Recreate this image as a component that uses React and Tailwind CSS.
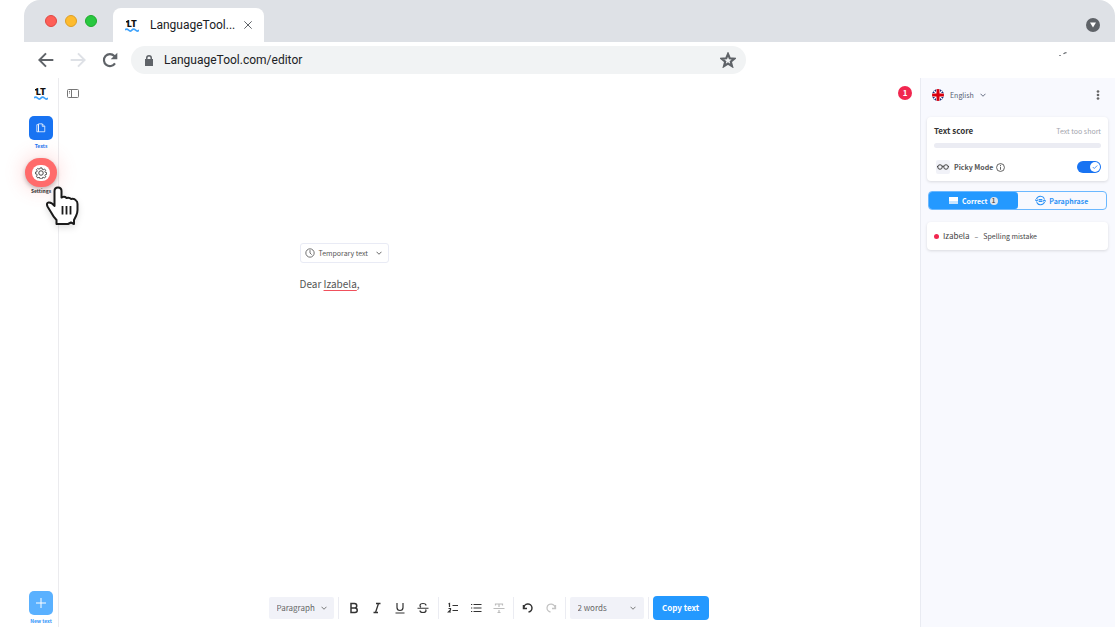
import { useState } from 'react';

function Icon({ className = 'size-3', children, width = 2, viewBox = '0 0 24 24' }) {
  return (
    <svg
      viewBox={viewBox}
      className={`shrink-0 ${className}`}
      fill="none"
      stroke="currentColor"
      strokeWidth={width}
      aria-hidden="true"
    >
      {children}
    </svg>
  );
}

function Logo() {
  return (
    <svg viewBox="0 -8 28 36" className="w-3.5 h-[18px] shrink-0" role="img" aria-label="LanguageTool">
      <text x="4" y="14" fontFamily="Inter, sans-serif" fontWeight="900" fontSize="17" fill="#111">
        LT
      </text>
      <path d="M2 2h5v3H2z" fill="#111" />
      <path
        d="M0 20q3-4 7 0t7 0 7 0 7 0"
        fill="none"
        stroke="#3ea2fb"
        strokeWidth="3.500"
      />
    </svg>
  );
}

function Chevron({ className = 'size-1.5' }) {
  return (
    <Icon className={className} width={3.5}>
      <path d="M2 7l10 10L22 7" />
    </Icon>
  );
}

function TabStrip() {
  return (
    <div className="h-[42px] flex items-end bg-[#dee1e6] rounded-t-2xl">
      <div className="self-center flex gap-2 pl-[21px] pr-4">
        <button aria-label="Close" className="size-3 rounded-full bg-[#fe5f57] border border-[#df4843]" />
        <button aria-label="Minimize" className="size-3 rounded-full bg-[#febb2e] border border-[#dd9f25]" />
        <button aria-label="Maximize" className="size-3 rounded-full bg-[#28c840] border border-[#1eab2c]" />
      </div>
      <div className="w-[151px] h-[34px] bg-white rounded-t-lg flex items-center px-3">
        <Logo />
        <span className="ml-[11px] text-[12px] leading-4 text-[#202124] grow">LanguageTool...</span>
        <button aria-label="Close tab" className="text-[#5f6368]">
          <Icon className="size-2" width={3}>
            <path d="M1 1l22 22M23 1L1 23" />
          </Icon>
        </button>
      </div>
      <button
        aria-label="Search tabs"
        className="ml-auto mr-[15px] mb-2.5 size-3.5 rounded-full bg-[#5f6368] flex items-center justify-center"
      >
        <svg viewBox="0 0 10 10" className="size-1.5" fill="#fff">
          <path d="M0 1h10L5 9z" />
        </svg>
      </button>
    </div>
  );
}

function AddressBar() {
  return (
    <div className="h-9 flex items-center bg-white pl-3.5">
      <nav className="flex items-center gap-4 text-[#5f6368]">
        <button aria-label="Back">
          <Icon className="size-4" width={3}>
            <path d="M23 12H3M12 2L2 12l10 10" />
          </Icon>
        </button>
        <button aria-label="Forward" className="text-[#dee1e6]">
          <Icon className="size-4" width={3}>
            <path d="M1 12h20M12 2l10 10-10 10" />
          </Icon>
        </button>
        <button aria-label="Reload">
          <Icon className="size-4" width={3.2}>
            <path d="M19.500 17a9 9 0 1 1-1-11l2 2" />
            <path d="M23 1v10H13z" fill="currentColor" stroke="none" />
          </Icon>
        </button>
      </nav>
      <div className="ml-[13px] w-[615px] h-7 rounded-full bg-[#f1f3f4] flex items-center pl-3.5 pr-2.5 text-[#5f6368]">
        <svg viewBox="0 0 16 22" className="w-2 h-[11px]" fill="currentColor">
          <path d="M2 8V6a6 6 0 0 1 12 0v2h2v14H0V8zm3 0h6V6a3 3 0 0 0-6 0z" />
        </svg>
        <input
          aria-label="Address"
          defaultValue="LanguageTool.com/editor"
          className="ml-[11px] grow min-w-0 bg-transparent text-[12px] leading-4 text-[#202124] outline-none"
        />
        <button aria-label="Bookmark">
          <Icon className="size-4" width={3.2}>
            <path d="M12 3l2.600 6.400 7 .5-5.400 4.500 1.800 6.800-6-3.800-6 3.800 1.800-6.800L2.400 9.900l7-.5z" />
          </Icon>
        </button>
      </div>
      <svg viewBox="0 0 8 4" className="ml-auto mr-12 mb-3 w-2 h-1" fill="none" stroke="#5f6368">
        <path d="M0 3.500h2" strokeWidth=".7" />
        <path d="M4.500 2Q5.500 .7 7.500.7" strokeWidth="1.200" />
      </svg>
    </div>
  );
}

function Pointer() {
  return (
    <svg
      viewBox="0 0 34 40"
      className="absolute left-3.5 top-7 z-20 w-[34px] h-10 drop-shadow-md pointer-events-none"
      aria-hidden="true"
    >
      <path
        d="M9.500 5q0-3.500 3.500-3.500T16.500 5v6.500q3-1.500 5 .5 3-1 4.500 1 3-1 5 1.500 1.500 1 1.500 3.500v6q0 3-1.500 6t-2 4V38l-3-1.500-3 1.500H11.500v-4q-3-3-5-7L2.500 20.500Q1 17 3.500 16.500q3-.5 6 3.500z"
        fill="#fff"
        stroke="#1b1b1b"
        strokeWidth="2"
        strokeLinejoin="round"
      />
      <path d="M17.500 20v8.500M21.500 20v8.500M25.500 20v8.500" stroke="#1b1b1b" strokeWidth="1.800" />
    </svg>
  );
}

function Sidebar() {
  return (
    <aside className="w-[35px] shrink-0 bg-white border-r border-[#ebebee] flex flex-col items-center pt-1.5">
      <Logo />
      <button className="mt-3.5 flex flex-col items-center text-[5px] leading-3 font-bold text-[#1873f2]">
        <span className="size-6 rounded-[5px] bg-[#1873f2] text-white flex items-center justify-center">
          <Icon className="size-2.5" width={1.8}>
            <path d="M6 2h9l6 6v13H6zM15 2v6h6M6 4H2v17h4M6 4v17" />
          </Icon>
        </span>
        Texts
      </button>
      <div className="relative mt-1.5">
        <button className="flex flex-col items-center text-[5px] leading-3 font-bold text-[#333]">
          <span className="-mx-2 w-8 h-[29px] rounded-full bg-[#ff6b6b] shadow-[0_0_16px_6px_#ff6b6b26,0_2px_4px_#0004] flex items-center justify-center">
            <span className="w-[18px] h-4 rounded-full bg-white flex items-center justify-center">
              <Icon className="size-3" width={1.8}>
                <path d="M10 2h4l.6 3 2 .9 2.600-1.700 2.800 2.800-1.700 2.600.8 2 2.900.6v3.600l-2.900.6-.8 2 1.700 2.600-2.800 2.800-2.600-1.700-2 .9-.6 2.900h-4l-.6-2.900-2-.9-2.600 1.700L2 19.900l1.700-2.600-.8-2L0 14.700V11l2.900-.6.8-2L2 5.800 4.800 3l2.600 1.700 2-.9z" transform="translate(1 0) scale(.93)" />
                <circle cx="12" cy="12" r="4.500" />
              </Icon>
            </span>
          </span>
          <span className="-mt-0.5 relative">Settings</span>
        </button>
        <Pointer />
      </div>
      <button className="mt-auto flex flex-col items-center whitespace-nowrap text-[5px] leading-3 font-bold text-[#3296fa]">
        <span className="size-6 rounded-[5px] bg-[#5ab1ff] text-white flex items-center justify-center">
          <Icon className="size-2.5" width={2.4}>
            <path d="M12 0v24M0 12h24" />
          </Icon>
        </span>
        New text
      </button>
    </aside>
  );
}

function Divider() {
  return <span className="w-px h-[22px] bg-[#ebecf2]" />;
}

function Toolbar() {
  return (
    <div className="mt-auto mb-[7px] pr-0.5 flex items-center justify-center text-[#333]">
      <div className="relative flex items-center mr-1 text-[#666]">
        <select
          aria-label="Text style"
          className="appearance-none w-[65px] h-[22px] pl-2 rounded-xs bg-[#f1f2f8] text-[8px] leading-3"
        >
          <option>Paragraph</option>
        </select>
        <Chevron className="size-1.5 absolute right-[7px] pointer-events-none" />
      </div>
      <Divider />
      <div className="flex items-center gap-[11px] px-[9px]">
        <button aria-label="Bold">
          <Icon width={3}>
            <path d="M6 3h7a4.500 4.500 0 0 1 0 9H6zM6 12h8a4.500 4.500 0 0 1 0 9H6z" />
          </Icon>
        </button>
        <button aria-label="Italic">
          <Icon width={2.6}>
            <path d="M10 3h9M5 21h9M15 3L9 21" />
          </Icon>
        </button>
        <button aria-label="Underline">
          <Icon width={2.4}>
            <path d="M6 2v9a6 6 0 0 0 12 0V2M3 22h18" />
          </Icon>
        </button>
        <button aria-label="Strikethrough">
          <Icon width={2.4}>
            <path d="M18 7c0-3-3-4-6-4S6 4 6 7c0 2 1 3 2 3.500M1 12.500h22M6 17c0 3 3 4 6 4s6-1 6-4c0-1-.3-1.500-1-2" />
          </Icon>
        </button>
      </div>
      <Divider />
      <div className="flex items-center gap-[11px] px-2">
        <button aria-label="Numbered list">
          <Icon width={2.4}>
            <path d="M11 7h11M11 17h11M3 4l2-1v7M3 13h4v3l-4 4h5" />
          </Icon>
        </button>
        <button aria-label="Bullet list">
          <Icon width={2.4}>
            <path d="M7 5h16M7 12h16M7 19h16M2 5h2.500M2 12h2.500M2 19h2.500" />
          </Icon>
        </button>
        <button aria-label="Clear formatting" className="text-[#bbb]">
          <Icon width={2.4}>
            <path d="M5 7V4h14v3M12 4v6M1 13h22M12 16v5M9 21h6" />
          </Icon>
        </button>
      </div>
      <Divider />
      <div className="flex items-center gap-[11px] px-2">
        <button aria-label="Undo">
          <Icon width={3}>
            <path d="M3 6v7h7M4 13a8 8 0 1 1 9 7" />
          </Icon>
        </button>
        <button aria-label="Redo" className="text-[#c4c4c4]">
          <Icon width={2.6}>
            <path d="M21 6v7h-7M20 13a8 8 0 1 0-9 7" />
          </Icon>
        </button>
      </div>
      <Divider />
      <div className="relative flex items-center mx-1 text-[#666]">
        <select
          aria-label="Text statistics"
          className="appearance-none w-[74px] h-[22px] pl-2 rounded-xs bg-[#f1f2f8] text-[8px] leading-3"
        >
          <option>2 words</option>
        </select>
        <Chevron className="size-1.5 absolute right-2 pointer-events-none" />
      </div>
      <Divider />
      <button className="ml-1 w-14 h-6 rounded-[4px] bg-[#2499ff] text-white text-[8px] leading-3 font-bold">
        Copy text
      </button>
    </div>
  );
}

function Editor() {
  return (
    <main className="grow min-w-0 flex flex-col bg-white">
      <div className="flex items-center justify-between pt-2 pl-2 pr-2">
        <button aria-label="Toggle sidebar" className="text-[#777]">
          <Icon className="w-3 h-[9px]" viewBox="0 0 24 18">
            <rect x="1" y="1" width="22" height="16" rx="2" />
            <path d="M9 1v16M4 5h2M4 8h2" />
          </Icon>
        </button>
        <span className="size-3.5 rounded-full bg-[#f1264f] text-white text-[8px] leading-3 font-bold flex items-center justify-center">
          1
        </span>
      </div>
      <div className="w-[380px] mx-auto mt-[143px] text-[#555]">
        <button className="h-5 px-1 flex items-center rounded-[3px] border border-[#e9ebf5] text-[7px] leading-3">
          <Icon className="size-2.5 mr-1">
            <circle cx="12" cy="12" r="10" />
            <path d="M12 5v7l4 4" />
          </Icon>
          Temporary text
          <Chevron className="size-1.5 ml-2 mr-0.5" />
        </button>
        <div
          contentEditable
          suppressContentEditableWarning
          role="textbox"
          aria-label="Text"
          spellCheck={false}
          className="mt-[13px] text-[10px] leading-4 outline-none"
        >
          Dear{' '}
          <span className="underline decoration-[#f0505c] decoration-1 underline-offset-2">Izabela</span>,
        </div>
      </div>
      <Toolbar />
    </main>
  );
}

function Flag() {
  return (
    <svg viewBox="0 0 24 24" className="size-3 rounded-full" aria-hidden="true">
      <path d="M0 0h24v24H0z" fill="#1b2a7b" />
      <path d="M2 2l20 20M22 2L2 22" stroke="#fff" strokeWidth="2.500" />
      <path d="M12 0v24M0 12h24" stroke="#fff" strokeWidth="8" />
      <path d="M12 0v24M0 12h24" stroke="#d80010" strokeWidth="6" />
    </svg>
  );
}

function Panel() {
  const [picky, setPicky] = useState(true);
  return (
    <aside className="w-[195px] shrink-0 bg-[#f8f9fe] border-l border-[#e9ebf2] pl-1.5 pr-[7px] text-[7px] leading-3 text-[#444]">
      <div className="h-[33px] flex items-center pl-[5px] pr-2">
        <Flag />
        <div className="relative flex items-center ml-1.5 text-[#555d73]">
          <select aria-label="Language" className="appearance-none w-9 h-4 bg-transparent">
            <option>English</option>
          </select>
          <Chevron className="size-1.5 absolute right-0 pointer-events-none" />
        </div>
        <button aria-label="More options" className="ml-auto">
          <svg viewBox="0 0 4 12" className="w-1 h-2.5" fill="#666">
            <circle cx="2" cy="1.800" r="1.600" />
            <circle cx="2" cy="6" r="1.600" />
            <circle cx="2" cy="10.200" r="1.600" />
          </svg>
        </button>
      </div>

      <section className="mt-1.5 rounded-[4px] bg-white px-[7px] pt-2 pb-1.5 shadow-[0_1px_3px_#00000020]">
        <div className="flex items-center justify-between">
          <h2 className="text-[8px] font-bold text-[#333]">Text score</h2>
          <span className="text-[#a3a5ad]">Text too short</span>
        </div>
        <div className="mt-1.5 h-[5px] rounded-full bg-[#ebecf3]" />
        <div className="mt-[11px] h-4 flex items-center">
          <span className="ml-0.5 size-3.5 rounded-xs bg-[#f1f2f8] flex items-center justify-center">
            <Icon className="w-3 h-1.5" viewBox="0 0 24 12">
              <circle cx="6" cy="6" r="4.500" />
              <circle cx="18" cy="6" r="4.500" />
              <path d="M10 5q2-2 4 0M0 5h2M22 5h2" />
            </Icon>
          </span>
          <label htmlFor="picky" className="ml-1 font-bold text-[#555]">
            Picky Mode
          </label>
          <Icon className="size-[9px] ml-[3px]" width={2.2}>
            <circle cx="12" cy="12" r="10.500" />
            <path d="M12 10v8M12 5v3" />
          </Icon>
          <span className="relative ml-auto w-6 h-3">
            <input
              id="picky"
              type="checkbox"
              checked={picky}
              onChange={(e) => setPicky(e.target.checked)}
              className="peer appearance-none block w-6 h-3 rounded-full bg-gray-300 checked:bg-[#1873f2]"
            />
            <span className="absolute top-px left-px peer-checked:left-[13px] size-2.5 rounded-full bg-white text-[#1873f2] flex items-center justify-center pointer-events-none">
              <Icon className="size-1.5" width={3}>
                <path d="M3 12l6 6L21 6" />
              </Icon>
            </span>
          </span>
        </div>
      </section>

      <div className="mt-2.5 mx-px h-[19px] flex rounded-[4px] border border-[#6bb8ff] overflow-hidden font-bold">
        <button className="flex-1 flex items-center justify-center bg-[#2499ff] text-white rounded-r-[3px]">
          <svg viewBox="0 0 18 14" className="w-[9px] h-[7px] mr-1" fill="#fff">
            <path d="M0 0h18v8H0z" />
            <path d="M0 8h18v6H0z" fillOpacity=".75" />
          </svg>
          Correct
          <span className="ml-0.5 size-2 rounded-full bg-[#dfe5ee] text-[#555] text-[6px] leading-2">1</span>
        </button>
        <button className="flex-1 flex items-center justify-center text-[#2f93f5]">
          <Icon className="size-[11px] mr-[3px]" width={2.4}>
            <path d="M3 9a9.500 9.500 0 0 1 17.500-1M21 15a9.500 9.500 0 0 1-17.500 1M0 10l3.500 3L7 10M17 14l3.500-3 3.500 3" />
            <path d="M8 10h8M8 14h8" />
          </Icon>
          Paraphrase
        </button>
      </div>

      <button className="mt-3 w-full h-7 px-[7px] flex items-center rounded-[4px] bg-white shadow-[0_1px_3px_#00000020]">
        <span className="size-[5px] rounded-full bg-[#f1264f]" />
        <span className="ml-1 text-[8px]">Izabela</span>
        <span className="mx-[5px]">–</span>
        Spelling mistake
      </button>
    </aside>
  );
}

export default function App() {
  return (
    <div className="min-h-screen flex flex-col bg-white pl-6 font-[Roboto,sans-serif]">
      <TabStrip />
      <AddressBar />
      <div className="grow flex font-['Noto_Sans_CJK_SC',sans-serif]">
        <Sidebar />
        <Editor />
        <Panel />
      </div>
    </div>
  );
}
